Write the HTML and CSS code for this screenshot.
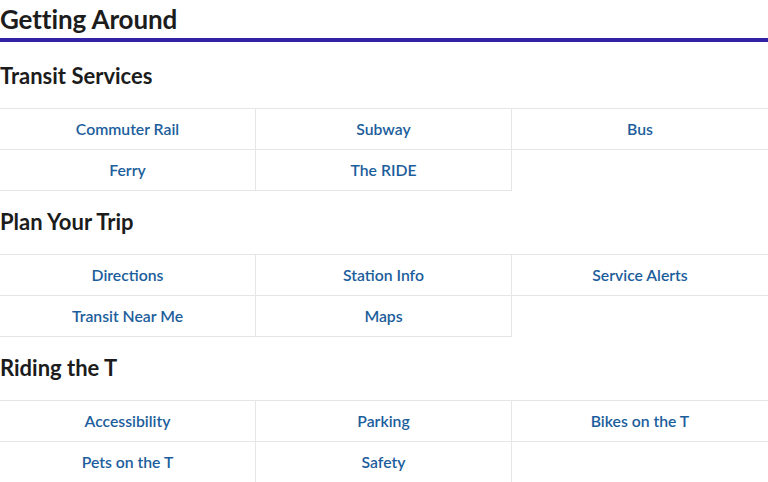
FILE: index.html
```html
<!DOCTYPE html>
<html>
<head>
<meta charset="utf-8">
<link rel="stylesheet" href="styles.css">
</head>
<body>
<h1 class="title">Getting Around</h1>
<section class="section">
  <h2 class="heading">Transit Services</h2>
  <div class="grid">
    <a class="cell">Commuter Rail</a>
    <a class="cell">Subway</a>
    <a class="cell">Bus</a>
    <a class="cell">Ferry</a>
    <a class="cell">The RIDE</a>
  </div>
</section>
<section class="section">
  <h2 class="heading">Plan Your Trip</h2>
  <div class="grid">
    <a class="cell">Directions</a>
    <a class="cell">Station Info</a>
    <a class="cell">Service Alerts</a>
    <a class="cell">Transit Near Me</a>
    <a class="cell">Maps</a>
  </div>
</section>
<section class="section">
  <h2 class="heading">Riding the T</h2>
  <div class="grid">
    <a class="cell">Accessibility</a>
    <a class="cell">Parking</a>
    <a class="cell">Bikes on the T</a>
    <a class="cell">Pets on the T</a>
    <a class="cell">Safety</a>
  </div>
</section>
</body>
</html>
```
FILE: styles.css
```css
* { box-sizing: border-box; }
body {
  margin: 0;
  font-family: Lato, "Open Sans", sans-serif;
  color: #1c1c1c;
  background: #fff;
}
.title {
  margin: 0;
  font-size: 26px;
  font-weight: 700;
  line-height: 38px;
  border-bottom: 4px solid #3222a6;
  letter-spacing: -0.1px;
}
.heading {
  margin: 0;
  font-size: 22px;
  font-weight: 700;
  line-height: 28px;
  padding: 20px 0 18px;
}
.section + .section .heading {
  padding-top: 17px;
}
.grid {
  display: grid;
  grid-template-columns: repeat(3, 1fr);
  border-top: 1px solid #e6e6e6;
}
.cell {
  display: flex;
  align-items: center;
  justify-content: center;
  height: 41px;
  padding-bottom: 2px;
  border-bottom: 1px solid #e6e6e6;
  border-right: 1px solid #e6e6e6;
  color: #1c5e9c;
  font-size: 15.75px;
  font-weight: 600;
  text-decoration: none;
}
.cell:nth-child(3n) { border-right: none; }
```
